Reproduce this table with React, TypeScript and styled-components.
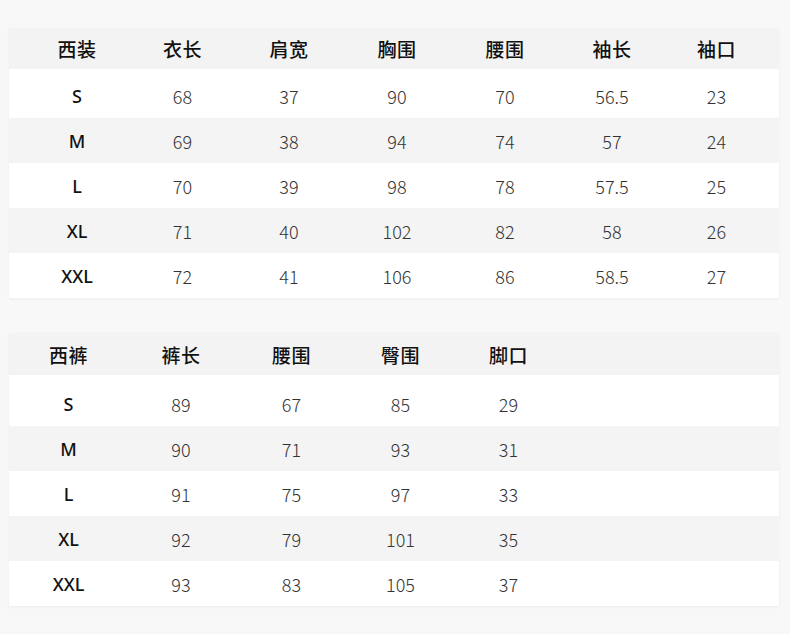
import React from "react";
import styled, { createGlobalStyle } from "styled-components";

const GlobalStyle = createGlobalStyle`
  html, body {
    margin: 0;
    padding: 0;
    background: #f8f8f8;
  }
  body {
    font-family: "Noto Sans CJK SC", "Noto Sans", sans-serif;
  }
`;

const Page = styled.div`
  width: 790px;
  height: 634px;
  box-sizing: border-box;
  padding: 28px 11px 0 9px;
  display: flex;
  flex-direction: column;
  gap: 35px;
  background: #f8f8f8;
`;

const Card = styled.div<{ $padLeft: number }>`
  background: #ffffff;
  box-shadow: 0 1px 3px rgba(0, 0, 0, 0.05);
  display: flex;
  flex-direction: column;
  --pad-left: ${(p) => p.$padLeft}px;
`;

const Row = styled.div<{ $cols: string; $tone: "head" | "white" | "gray"; $h: number }>`
  display: grid;
  grid-template-columns: ${(p) => p.$cols};
  padding-left: var(--pad-left);
  height: ${(p) => p.$h}px;
  align-items: center;
  background: ${(p) =>
    p.$tone === "head" ? "#f3f3f3" : p.$tone === "gray" ? "#f4f4f4" : "#ffffff"};
`;

const Body = styled.div<{ $padTop: number }>`
  display: flex;
  flex-direction: column;
  padding-top: ${(p) => p.$padTop}px;
  background: #ffffff;
`;

const HeadCell = styled.div`
  text-align: center;
  font-size: 19px;
  font-weight: 500;
  color: #111111;
  letter-spacing: 0.5px;
`;

const SizeCell = styled.div`
  text-align: center;
  font-family: "Noto Sans", "Noto Sans CJK SC", sans-serif;
  font-size: 18px;
  font-weight: 500;
  color: #111111;
`;

const NumCell = styled.div`
  text-align: center;
  font-family: "Noto Sans CJK SC", "Noto Sans", sans-serif;
  font-size: 18px;
  font-weight: 300;
  color: #333333;
`;

type TableProps = {
  cols: string;
  padLeft: number;
  headers: string[];
  rows: (string | number)[][];
  headH: number;
  padTop: number;
};

function SizeTable({ cols, padLeft, headers, rows, headH, padTop }: TableProps) {
  return (
    <Card $padLeft={padLeft}>
      <Row $cols={cols} $tone="head" $h={headH}>
        {headers.map((h) => (
          <HeadCell key={h}>{h}</HeadCell>
        ))}
      </Row>
      <Body $padTop={padTop}>
        {rows.map((r, i) => (
          <Row key={i} $cols={cols} $tone={i % 2 === 1 ? "gray" : "white"} $h={45}>
            <SizeCell>{r[0]}</SizeCell>
            {r.slice(1).map((v, j) => (
              <NumCell key={j}>{v}</NumCell>
            ))}
          </Row>
        ))}
      </Body>
    </Card>
  );
}

const suitHeaders = ["西装", "衣长", "肩宽", "胸围", "腰围", "袖长", "袖口"];
const suitRows = [
  ["S", "68", "37", "90", "70", "56.5", "23"],
  ["M", "69", "38", "94", "74", "57", "24"],
  ["L", "70", "39", "98", "78", "57.5", "25"],
  ["XL", "71", "40", "102", "82", "58", "26"],
  ["XXL", "72", "41", "106", "86", "58.5", "27"],
];

const pantsHeaders = ["西裤", "裤长", "腰围", "臀围", "脚口"];
const pantsRows = [
  ["S", "89", "67", "85", "29"],
  ["M", "90", "71", "93", "31"],
  ["L", "91", "75", "97", "33"],
  ["XL", "92", "79", "101", "35"],
  ["XXL", "93", "83", "105", "37"],
];

export default function App() {
  return (
    <>
      <GlobalStyle />
      <Page>
        <SizeTable
          cols="106px 105px 108px 108px 108px 106px 103px"
          padLeft={15}
          headers={suitHeaders}
          rows={suitRows}
          headH={41}
          padTop={4}
        />
        <SizeTable
          cols="113px 112px 109px 109px 107px 1fr"
          padLeft={3}
          headers={pantsHeaders}
          rows={pantsRows}
          headH={42}
          padTop={6}
        />
      </Page>
    </>
  );
}
